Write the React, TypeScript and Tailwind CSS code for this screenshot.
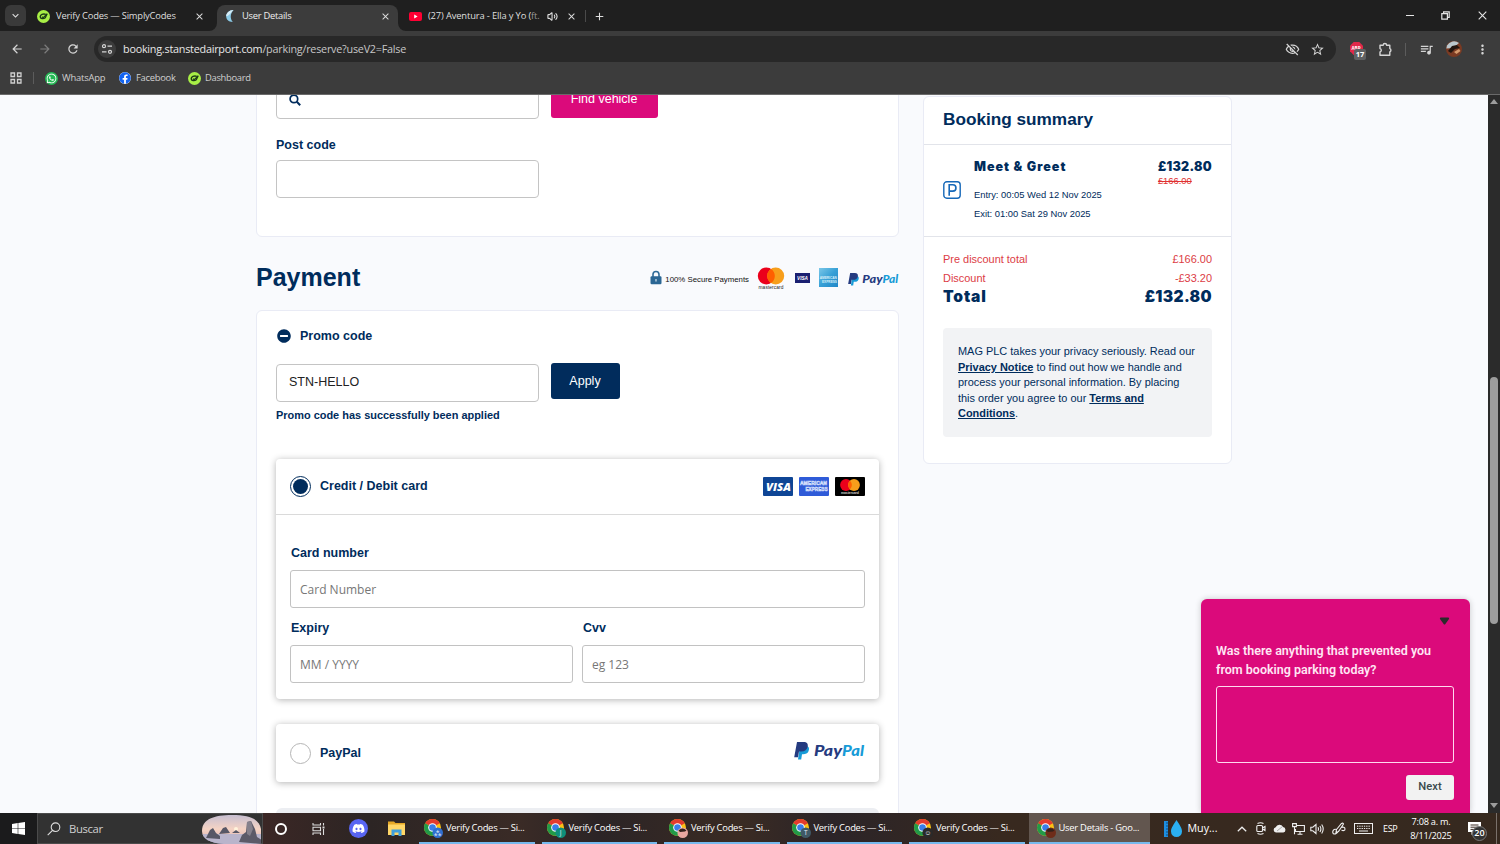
import type { ReactNode } from 'react';
import {
  MdAdd,
  MdArrowBack,
  MdArrowForward,
  MdClose,
  MdExpandMore,
  MdMoreVert,
  MdOutlineVisibilityOff,
  MdQueueMusic,
  MdRefresh,
  MdStarBorder,
} from 'react-icons/md';
import { FaDiscord, FaFacebook, FaMinusCircle, FaWhatsapp } from 'react-icons/fa';
import { Volume2 } from 'lucide-react';

export default function App() {
  return (
    <div className="flex h-[844px] w-[1500px] flex-col overflow-hidden bg-[#f9fafd] font-['Liberation_Sans',sans-serif] text-[#002c5c]">
      <TabStrip />
      <Toolbar />
      <Bookmarks />

      <div className="relative flex h-[718px] shrink-0 overflow-hidden">
        <main className="flex w-[1488px] items-start gap-6 pl-[256px]">
          <div className="flex w-[643px] shrink-0 flex-col">
            <VehicleCard />
            <PaymentHeading />
            <PaymentCard />
          </div>
          <BookingSummary />
        </main>
        <PageScrollbar />
        <SurveyWidget />
      </div>

      <Taskbar />
    </div>
  );
}

/* ---------- Browser ---------- */

function TabStrip() {
  return (
    <div className="flex h-[31px] shrink-0 items-end bg-[#1f1f1f] font-['Open_Sans',sans-serif] text-[9.4px] text-[#dedede]">
      <div className="mb-[5px] ml-[5px] flex h-[21px] w-[21px] items-center justify-center rounded-md bg-[#3a3a3a]">
        <MdExpandMore className="h-[13px] w-[13px]" />
      </div>

      <div className="flex h-[26px] w-[191px] items-center pb-1 pl-[11px]">
        <SimplyLogo />
        <span className="mt-px ml-[6px] w-[138px] whitespace-nowrap tracking-[-0.19px]">Verify Codes — SimplyCodes</span>
        <MdClose className="h-[11px] w-[11px]" />
      </div>

      <div className="relative flex h-[26px] w-[181px] items-center rounded-t-lg bg-[#3c3c3c] pb-1 pl-[8px]">
        <TabFlare side="left" />
        <TabFlare side="right" />
        <svg viewBox="0 0 12 14" className="h-[14px] w-3">
          <path d="M8.500 1C4 1.200 1.200 4 1.200 7.200S3.500 12.800 7.800 13C5 9.500 5 5 8.500 1Z" fill="#8ccbe8" />
          <path d="M8.500 1C4 1.200 1.200 4 1.200 7.200 3 7.500 5 5 8.500 1Z" fill="#d5ecf7" />
        </svg>
        <span className="mt-px ml-[5px] w-[138px] tracking-[-0.27px] text-[#eee]">User Details</span>
        <MdClose className="h-[11px] w-[11px]" />
      </div>

      <div className="flex h-[26px] items-center pb-1 pl-[11px]">
        <svg viewBox="0 0 13 9" className="h-[9px] w-[13px]">
          <rect width="13" height="9" rx="2" fill="#ff0033" />
          <path d="M5.200 2.500v4l3.400-2z" fill="#fff" />
        </svg>
        <span className="mt-px ml-[6px] w-[119px] whitespace-nowrap tracking-[-0.15px]">
          (27) Aventura - Ella y Yo (<span className="text-[#999]">ft.</span>
        </span>
        <Volume2 className="h-[11px] w-[11px]" strokeWidth={2.4} />
        <MdClose className="ml-[8px] h-[11px] w-[11px]" />
        <span className="ml-[8px] h-[12px] w-px bg-[#4a4a4a]" />
        <MdAdd className="ml-[7px] h-[13px] w-[13px]" />
      </div>

      <div className="mb-[5px] ml-auto flex h-[21px] items-center">
        <span className="h-px w-[8px] bg-[#e5e5e5]" />
        <svg viewBox="0 0 9 9" className="ml-[27px] h-[9px] w-[9px]" fill="none" stroke="#e5e5e5" strokeWidth="1.2">
          <path d="M.8 2.600h5.600v5.600H.8zM2.600 2.600V.8h5.600v5.600H6.400" />
        </svg>
        <svg viewBox="0 0 9 9" className="mr-[13px] ml-[28px] h-[9px] w-[9px]" stroke="#e5e5e5" strokeWidth="1.1">
          <path d="m.7.700 7.600 7.600m0-7.600L.7 8.300" />
        </svg>
      </div>
    </div>
  );
}

function TabFlare({ side }: { side: 'left' | 'right' }) {
  return (
    <svg
      viewBox="0 0 8 8"
      className={`absolute bottom-0 h-2 w-2 ${side === 'left' ? '-left-2' : '-right-2 -scale-x-100'}`}
    >
      <path d="M8 0a8 8 0 0 1-8 8h8z" fill="#3c3c3c" />
    </svg>
  );
}

function Toolbar() {
  return (
    <div className="flex h-[36px] shrink-0 items-center bg-[#3c3c3c] text-[#d5d5d5]">
      <MdArrowBack className="ml-[10px] h-[14px] w-[14px]" />
      <MdArrowForward className="ml-[14px] h-[14px] w-[14px] text-[#7d7d7d]" />
      <MdRefresh className="ml-[14px] h-[14px] w-[14px]" />

      <div className="ml-[14px] flex h-[26px] w-[1242px] items-center rounded-full bg-[#282828] pl-[4px]">
        <span className="flex h-[18px] w-[18px] items-center justify-center rounded-full bg-[#3c3c3c]">
          <svg viewBox="0 0 12 12" className="h-[12px] w-[12px]" fill="none" stroke="#d5d5d5" strokeWidth="1.2">
            <circle cx="3" cy="3.200" r="1.500" />
            <path d="M6.500 3.200H11M1 8.800h4.500" />
            <circle cx="9" cy="8.800" r="1.500" />
          </svg>
        </span>
        <span className="mt-px ml-[7px] font-['Open_Sans',sans-serif] text-[10.8px] tracking-[-0.23px] text-[#e8e8e8]">
          booking.stanstedairport.com<span className="text-[#c7c7c7]">/parking/reserve?useV2=False</span>
        </span>
        <MdOutlineVisibilityOff className="ml-auto h-[15px] w-[15px]" />
        <MdStarBorder className="mr-[11px] ml-[10px] h-[15px] w-[15px]" />
      </div>

      <div className="relative ml-[14px] h-[16px] w-[18px] font-['Open_Sans',sans-serif]">
        <svg viewBox="0 0 14 14" className="mt-px h-[13px] w-[13px]">
          <path d="M4 0h6l4 4v6l-4 4H4l-4-4V4z" fill="#e0284a" />
          <text x="1.500" y="8.800" fontSize="5" fontWeight="700" fill="#fff">ABP</text>
        </svg>
        <span className="absolute top-[8px] left-[4px] flex h-[11px] w-[12px] items-center justify-center rounded-[2px] bg-[#5f6163] text-[7.5px] font-bold text-white">
          17
        </span>
      </div>
      <svg viewBox="0 0 15 15" className="ml-[10px] h-[15px] w-[15px]" fill="none" stroke="#d5d5d5" strokeWidth="1.4">
        <path d="M2 3.200h3.200a1.700 1.700 0 0 1 3.400 0h3.200v3.400a1.700 1.700 0 0 1 0 3.200v3.400H2V9.900a1.700 1.700 0 0 0 0-3.300z" strokeLinejoin="round" />
      </svg>
      <span className="ml-[12px] h-[13px] w-px bg-[#5c5c5c]" />
      <MdQueueMusic className="ml-[13px] h-[15px] w-[15px]" />
      <svg viewBox="0 0 16 16" className="ml-[12px] h-4 w-4">
        <circle cx="8" cy="8" r="8" fill="#7a3a22" />
        <path d="M1 4.500a8 8 0 0 1 12-2.500L7 7 .3 7.500z" fill="#b9c6cc" />
        <path d="M2 10 6 5l5-1 3 3-5 1-4 4z" fill="#21150f" />
        <path d="m8 11 5-3 1.500 2-4 3z" fill="#d59a6c" />
      </svg>
      <MdMoreVert className="ml-[13px] h-[15px] w-[15px]" />
    </div>
  );
}

function Bookmarks() {
  return (
    <div className="flex h-[28px] shrink-0 items-center border-b border-[#6a6a6a] bg-[#3c3c3c] pb-[5px] font-['Open_Sans',sans-serif] text-[9.4px] text-[#cfcfcf]">
      <svg viewBox="0 0 12 12" className="ml-[10px] h-[12px] w-[12px]" fill="none" stroke="#cfcfcf" strokeWidth="1.3">
        <path d="M1 1h3.500v3.500H1zM7.500 1H11v3.500H7.500zM1 7.500h3.500V11H1zM7.500 7.500H11V11H7.500z" />
      </svg>
      <span className="ml-[11px] h-[12px] w-px bg-[#5c5c5c]" />
      <span className="ml-[11px] flex h-[13px] w-[13px] items-center justify-center rounded-full bg-[#24b954]">
        <FaWhatsapp className="h-[11px] w-[11px] text-white" />
      </span>
      <span className="mt-px ml-[4px] w-[57px] tracking-[-0.19px]">WhatsApp</span>
      <span className="flex h-[12px] w-[12px] rounded-full bg-white">
        <FaFacebook className="h-[12px] w-[12px] text-[#1464f0]" />
      </span>
      <span className="mt-px ml-[5px] w-[52px] tracking-[-0.27px]">Facebook</span>
      <SimplyLogo />
      <span className="mt-px ml-[4px] tracking-[-0.3px]">Dashboard</span>
    </div>
  );
}

function SimplyLogo() {
  return (
    <svg viewBox="0 0 13 13" className="h-[13px] w-[13px] shrink-0">
      <circle cx="6.500" cy="6.500" r="6.500" fill="#a8ef46" />
      <path d="M8.800 4.300C6 3.500 3.200 4.600 3.200 6.800c0 2 3.200 2.500 5 .9L10 4" fill="none" stroke="#1d3b16" strokeWidth="1.4" />
      <path d="m4.900 6.700 1.300 1L10.300 3.600" fill="none" stroke="#1d3b16" strokeWidth="1.1" />
    </svg>
  );
}

function PageScrollbar() {
  return (
    <div className="flex w-3 flex-col items-center bg-[#2b2b2b]">
      <span className="mt-[4px] border-x-[4px] border-b-[5px] border-x-transparent border-b-[#9d9d9d]" />
      <span className="mt-[273px] h-[247px] w-[8px] rounded-full bg-[#9d9d9d]" />
      <span className="mt-auto mb-[5px] border-x-[4px] border-t-[5px] border-x-transparent border-t-[#9d9d9d]" />
    </div>
  );
}

/* ---------- Booking form ---------- */

function VehicleCard() {
  return (
    <section className="-mt-[24px] flex h-[166px] flex-col rounded-md border border-[#e9ebf5] bg-white px-[19px] pt-[9px]">
      <div className="flex gap-[12px]">
        <div className="flex h-[38px] w-[263px] items-center rounded-[4px] border border-[#c4c4c4] pl-[12px]">
          <svg viewBox="0 0 12 12" className="h-[12px] w-[12px]" fill="none" stroke="#002c5c" strokeWidth="1.7">
            <circle cx="4.900" cy="4.900" r="3.800" />
            <path d="m7.800 7.800 3.400 3.400" strokeWidth="2" />
          </svg>
        </div>
        <button className="mt-[2px] h-[35px] w-[107px] rounded-[3px] bg-[#db0a7b] pr-px pb-[3px] text-[12.5px] text-white">Find vehicle</button>
      </div>
      <label className="mt-[18px] text-[12.5px] leading-4 font-bold">Post code</label>
      <div className="mt-[7px] h-[38px] w-[263px] rounded-[4px] border border-[#c4c4c4]" />
    </section>
  );
}

function PaymentHeading() {
  return (
    <div className="flex h-[73px] items-center pt-[8px]">
      <h2 className="text-[25px] font-bold">Payment</h2>
      <svg viewBox="0 0 12 14" className="ml-auto h-[15px] w-[12px]">
        <path d="M3 7V4a3 3 0 0 1 6 0v3" fill="none" stroke="#2f6a97" strokeWidth="1.6" />
        <rect x=".5" y="5.800" width="11" height="8" rx="1.200" fill="#2b6694" />
        <path d="M6 8.500v2.500" stroke="#d6e4ee" strokeWidth="1.2" />
      </svg>
      <span className="mt-[4px] ml-[3px] text-[7.8px] text-[#111]">100% Secure Payments</span>
      <svg viewBox="0 0 28 23" className="mt-px ml-[8px] h-[23px] w-[28px]">
        <circle cx="9.300" cy="9" r="8.500" fill="#eb001b" />
        <circle cx="18.700" cy="9" r="8.500" fill="#f79e1b" />
        <path d="M14 1.900a8.500 8.500 0 0 1 0 14.200 8.500 8.500 0 0 1 0-14.200" fill="#ff5f00" />
        <text x="1.500" y="21.500" fontSize="4.800" textLength="25" fill="#222">mastercard</text>
      </svg>
      <svg viewBox="0 0 15 10" className="ml-[10px] h-[10px] w-[15px]">
        <rect width="15" height="10" fill="#1a1f71" />
        <text x="2" y="7" fontSize="5.500" fontWeight="700" fontStyle="italic" textLength="11" lengthAdjust="spacingAndGlyphs" fill="#fff">VISA</text>
      </svg>
      <svg viewBox="0 0 19 19" className="ml-[9px] h-[19px] w-[19px]">
        <defs>
          <linearGradient id="amexFade" x1="0" y1="0" x2="1" y2="1">
            <stop offset="0" stopColor="#7ac7e8" />
            <stop offset="0.5" stopColor="#38a0d6" />
            <stop offset="1" stopColor="#1f86c8" />
          </linearGradient>
        </defs>
        <rect width="19" height="19" fill="url(#amexFade)" />
        <g fontSize="3.500" fontWeight="700" fill="#d9f0fa">
          <text x=".8" y="11" textLength="17" lengthAdjust="spacingAndGlyphs">AMERICAN</text>
          <text x="3" y="14.800" textLength="15" lengthAdjust="spacingAndGlyphs">EXPRESS</text>
        </g>
      </svg>
      <PayPalLogo className="mt-[3px] ml-[10px] h-[13px] w-[51px]" />
    </div>
  );
}

function PaymentCard() {
  return (
    <section className="flex h-[560px] shrink-0 flex-col rounded-t-md border border-[#e9ebf5] bg-white px-[19px] pt-[16px]">
      <div className="flex h-[18px] items-center">
        <FaMinusCircle className="ml-px h-[14px] w-[14px]" />
        <span className="ml-[9px] text-[12.5px] font-bold">Promo code</span>
      </div>
      <div className="mt-[18px] flex gap-[12px]">
        <div className="mt-px flex h-[38px] w-[263px] items-center rounded-[4px] border border-[#c4c4c4] pb-px pl-[12px] text-[12.5px] text-[#222]">
          STN-HELLO
        </div>
        <button className="h-[36px] w-[69px] rounded-[3px] bg-[#012c5c] pr-px text-[12.5px] text-white">Apply</button>
      </div>
      <p className="mt-[6px] text-[10.94px] leading-[14px] font-bold">Promo code has successfully been applied</p>

      <div className="mt-[37px] flex h-[240px] shrink-0 flex-col rounded-[4px] bg-white shadow-[0_1px_7px_rgba(0,0,0,0.3)]">
        <div className="flex h-[56px] items-center border-b border-[#dadada] px-[14px] text-[12.5px] font-bold">
          <span className="flex h-[21px] w-[21px] items-center justify-center rounded-full border border-[#002c5c]">
            <span className="h-[15px] w-[15px] rounded-full bg-[#002c5c]" />
          </span>
          <span className="ml-[9px]">Credit / Debit card</span>
          <CardBrands />
        </div>
        <div className="flex flex-col pt-[30px] pr-[14px] pl-[15px] text-[12.5px] leading-4 font-bold">
          <Field label="Card number" placeholder="Card Number" />
          <div className="mt-[12px] flex gap-[10px]">
            <Field label="Expiry" placeholder="MM / YYYY" />
            <Field label="Cvv" placeholder="eg 123" />
          </div>
        </div>
      </div>

      <div className="mt-[25px] flex h-[58px] shrink-0 items-center rounded-[4px] bg-white px-[14px] shadow-[0_1px_7px_rgba(0,0,0,0.3)]">
        <span className="h-[21px] w-[21px] rounded-full border border-[#b5b5b5]" />
        <span className="ml-[9px] text-[12.5px] font-bold">PayPal</span>
        <PayPalLogo className="mb-[5px] ml-auto h-[18px] w-[71px]" />
      </div>

      <div className="mt-[26px] h-[40px] shrink-0 rounded-md bg-[#eceef2]" />
    </section>
  );
}

function Field({ label, placeholder }: { label: string; placeholder: string }) {
  return (
    <div className="flex flex-1 flex-col">
      <label>{label}</label>
      <div className="mt-[9px] -ml-px flex h-[38px] items-center rounded-[3px] border border-[#c2c2c2] pt-px pl-[9px] font-['Open_Sans',sans-serif] text-[12px] font-normal text-[#777]">
        {placeholder}
      </div>
    </div>
  );
}

function CardBrands() {
  return (
    <div className="ml-auto flex gap-[6px]">
      <svg viewBox="0 0 30 19" className="h-[19px] w-[30px]">
        <rect width="30" height="19" rx="1" fill="#0e4595" />
        <text x="3" y="13.500" fontSize="11" fontFamily="Open Sans, sans-serif" fontWeight="800" fontStyle="italic" textLength="25" lengthAdjust="spacingAndGlyphs" fill="#fff">VISA</text>
      </svg>
      <svg viewBox="0 0 30 19" className="h-[19px] w-[30px]">
        <rect width="30" height="19" rx="1" fill="#2f5bd8" />
        <g fontSize="5" fontWeight="700" fill="#2f5bd8" stroke="#cfdcfa" strokeWidth=".6">
          <text x="1" y="8.300" textLength="27" lengthAdjust="spacingAndGlyphs">AMERICAN</text>
          <text x="6.500" y="14.300" textLength="22" lengthAdjust="spacingAndGlyphs">EXPRESS</text>
        </g>
      </svg>
      <svg viewBox="0 0 30 19" className="h-[19px] w-[30px]">
        <rect width="30" height="19" rx="1" fill="#000" />
        <circle cx="11" cy="8" r="5.900" fill="#eb001b" />
        <circle cx="19" cy="8" r="5.900" fill="#f79e1b" />
        <path d="M15 3.700a5.900 5.900 0 0 1 0 8.600 5.900 5.900 0 0 1 0-8.600" fill="#ff5f00" />
        <text x="6" y="17.400" fontSize="3.500" textLength="18" fill="#ccc">mastercard</text>
      </svg>
    </div>
  );
}

function PayPalLogo({ className }: { className: string }) {
  return (
    <svg viewBox="0 0 71 18" className={className}>
      <path d="M6 4h6.500c2.800.6 3 3 2 5.200-1 2.300-2.800 3-5.400 3H8L7.200 17.500H4z" fill="#179bd7" />
      <path d="M3 0h6.500c3.500 0 4.800 2 4.200 4.700-.7 3.200-3 4.800-6.200 4.800H5L4 15.300H.2z" fill="#253b80" />
      <g fontFamily="Lato, sans-serif" fontSize="15" fontWeight="900" fontStyle="italic">
        <text x="20" y="14.300" textLength="28" lengthAdjust="spacingAndGlyphs" fill="#253b80">Pay</text>
        <text x="48" y="14.300" textLength="22" lengthAdjust="spacingAndGlyphs" fill="#179bd7">Pal</text>
      </g>
    </svg>
  );
}

/* ---------- Summary ---------- */

function BookingSummary() {
  return (
    <aside className="mt-px flex h-[368px] w-[309px] shrink-0 flex-col rounded-md border border-[#e9ebf5] bg-white">
      <h3 className="flex h-[48px] shrink-0 items-center border-b border-[#e2e4ea] px-[19px] pb-px text-[17.2px] font-bold">Booking summary</h3>

      <div className="flex h-[92px] shrink-0 border-b border-[#e2e4ea] px-[19px]">
        <svg viewBox="0 0 18 18" className="mt-[36px] h-[18px] w-[18px]" fill="none" stroke="#1668b8">
          <rect x=".8" y=".8" width="16.400" height="16.400" rx="3" strokeWidth="1.4" />
          <path d="M6.200 14.800V3.800h3.600a3.100 3.100 0 0 1 0 6.300H6.200" strokeWidth="1.6" />
        </svg>
        <div className="ml-[13px] flex flex-col">
          <span className="mt-[13px] font-['Inter',sans-serif] text-[12.5px] leading-[18px] font-black tracking-[1px]">Meet &amp; Greet</span>
          <span className="mt-[10px] text-[9.375px] leading-[18.5px]">Entry: 00:05 Wed 12 Nov 2025</span>
          <span className="text-[9.375px] leading-[18.5px]">Exit: 01:00 Sat 29 Nov 2025</span>
        </div>
        <div className="ml-auto flex flex-col">
          <span className="mt-[13px] font-['Inter',sans-serif] text-[12.5px] leading-[18px] font-black tracking-[0.3px]">£132.80</span>
          <span className="text-[9.375px] leading-[11px] text-[#e03030] line-through">£166.00</span>
        </div>
      </div>

      <div className="flex flex-col px-[19px] pt-[13px]">
        <div className="flex justify-between text-[10.94px] leading-[18.5px] text-[#dc3c45]">
          <span>Pre discount total</span>
          <span>£166.00</span>
        </div>
        <div className="flex justify-between text-[10.94px] leading-[18.5px] text-[#dc3c45]">
          <span>Discount</span>
          <span>-£33.20</span>
        </div>
        <div className="flex justify-between font-['Inter',sans-serif] text-[15.6px] leading-5 font-black">
          <span className="tracking-[0.85px]">Total</span>
          <span className="tracking-[0.35px]">£132.80</span>
        </div>
        <p className="mt-[21px] h-[109px] rounded-[4px] bg-[#f2f3f5] pt-[16px] pl-[15px] text-[10.94px] leading-[15.6px]">
          MAG PLC takes your privacy seriously. Read our
          <br />
          <b className="underline">Privacy Notice</b> to find out how we handle and
          <br />
          process your personal information. By placing
          <br />
          this order you agree to our <b className="underline">Terms and</b>
          <br />
          <b className="underline">Conditions</b>.
        </p>
      </div>
    </aside>
  );
}

function SurveyWidget() {
  return (
    <div className="absolute right-[30px] bottom-0 flex h-[214px] w-[269px] flex-col rounded-t-md bg-[#db0a7b] pr-4 pl-[15px] font-['Roboto',sans-serif] shadow-[0_0_6px_rgba(0,0,0,0.2)]">
      <svg viewBox="0 0 11 8" className="mt-[18px] mr-[4px] h-[8px] w-[11px] self-end">
        <path d="M1.500.5h8q1 .5.500 1.500L6 7.500H5L1 2Q.5 1 1.500.5Z" fill="#2b2b2b" />
      </svg>
      <p className="mt-[16px] text-[12.5px] leading-[19px] font-semibold whitespace-nowrap text-[#ffe6f4]">
        Was there anything that prevented you
        <br />
        from booking parking today?
      </p>
      <div className="mt-[7px] h-[77px] shrink-0 rounded-[3px] border border-[#ffd9ee]" />
      <button className="mt-[12px] h-[25px] w-[48px] self-end rounded-[3px] bg-[#f2f2f2] text-[11.2px] font-medium text-[#3a4a4c]">Next</button>
    </div>
  );
}

/* ---------- Windows taskbar ---------- */

const windows: { title: string; badge: string; letter?: string; active?: boolean }[] = [
  { title: 'Verify Codes — Si...', badge: '#2f6fd0', letter: '⁂' },
  { title: 'Verify Codes — Si...', badge: '#0e8f7a', letter: 'J' },
  { title: 'Verify Codes — Si...', badge: '#e9a7a0' },
  { title: 'Verify Codes — Si...', badge: '#3f5866', letter: 'T' },
  { title: 'Verify Codes — Si...', badge: '#2a2a2a', letter: '☺' },
  { title: 'User Details - Goo...', badge: '#6e2c1a', active: true },
];

function Taskbar() {
  return (
    <div className="flex h-[31px] shrink-0 items-center bg-[linear-gradient(90deg,#3b2725_263px,#2c2524_370px,#3a2b26_520px,#2b2426_600px,#3a2b23_740px,#2b2428_830px,#38291f_1000px,#36291f_1500px)] font-['Open_Sans',sans-serif] text-white">
      <div className="flex h-full w-[37px] items-center justify-center bg-[#1b1b1c]">
        <svg viewBox="0 0 13 13" className="h-[13px] w-[13px]" fill="#fff">
          <path d="m0 1.900 5.700-.8v5.100H0zM6.300 1 13 0v6.200H6.300zM0 6.800h5.700v5.100L0 11.100zM6.300 6.800H13V13l-6.700-1z" />
        </svg>
      </div>
      <div className="flex h-full w-[226px] items-center border border-[#4b4b4b] bg-[#323232]">
        <svg viewBox="0 0 14 14" className="ml-[9px] h-[14px] w-[14px]" fill="none" stroke="#ddd" strokeWidth="1.1">
          <circle cx="8.500" cy="5.200" r="4.300" />
          <path d="M5.500 8.300.7 13.200" />
        </svg>
        <span className="mt-px ml-[8px] text-[11.3px] tracking-[-0.35px] text-[#cfcfcf]">Buscar</span>
        <SearchHighlight />
      </div>

      <div className="flex items-center">
        <span className="ml-[12px] h-[12px] w-[12px] rounded-full border-2 border-white" />
        <svg viewBox="0 0 13 12" className="ml-[25px] h-3 w-[13px]" fill="none" stroke="#ddd" strokeWidth="1.1">
          <path d="M1 0v2h7.500V0M1 4.200h7.500v3.600H1zM1 12v-2h7.500v2M11.500 0v2.500M11.500 6v6" />
          <path d="M11.500 3.500v2" strokeWidth="2" />
        </svg>
        <span className="ml-[24px] flex h-[19px] w-[19px] items-center justify-center rounded-full bg-[#5865f2]">
          <FaDiscord className="h-[13px] w-[13px]" />
        </span>
        <svg viewBox="0 0 17 15" className="ml-[20px] h-[15px] w-[17px]">
          <path d="M0 .5h6l1.500 1.500H17v12H0z" fill="#e6a927" />
          <path d="M0 3.500h17v10.500H0z" fill="#ffd768" />
          <path d="M3.500 8.500h10V15h-3v-3.500h-4V15h-3z" fill="#3f9fdc" />
        </svg>
      </div>

      <div className="ml-[14px] flex h-full gap-[7px]">
        {windows.map((w, i) => (
          <div
            key={i}
            className={`flex h-full items-center border-b-2 border-[#76b9ed] ${
              w.active ? '-ml-[3px] w-[121px] bg-[#62564f] pl-[8px]' : 'w-[115.5px] pl-[5px]'
            }`}
          >
            <ChromeIcon badge={w.badge} letter={w.letter} />
            <span className="mt-[2px] ml-[2px] text-[9.4px] tracking-[-0.25px] whitespace-nowrap">{w.title}</span>
          </div>
        ))}
      </div>

      <svg viewBox="0 0 20 20" className="ml-[13px] h-5 w-5">
        <path d="M1 2h4v16H1z" fill="#1e8fe0" />
        <path d="M3 4H5M3 7H5M3 10H5M3 13H5M3 16H5" stroke="#0c4d87" />
        <path d="M13.500 1c3 5 5.500 7.500 5.500 11.500a5.500 5.500 0 0 1-11 0C8 8.500 10.500 6 13.500 1Z" fill="#2bb0f2" />
      </svg>
      <span className="ml-[5px] text-[10.7px]">Muy...</span>
      <Tray />
    </div>
  );
}

function ChromeIcon({ badge, letter }: { badge: string; letter?: string }) {
  return (
    <svg viewBox="0 0 20 20" className="mt-[2px] h-5 w-5 shrink-0">
      <circle cx="8.500" cy="8.500" r="8.500" fill="#fbc116" />
      <path d="M8.500 8.500 1.140 4.250a8.500 8.500 0 0 1 14.720 0z" fill="#e33b2e" />
      <path d="M1.140 4.250A8.500 8.500 0 0 0 8.500 17l3.500-6.500-3.500-2z" fill="#229a48" />
      <circle cx="8.500" cy="8.500" r="4.300" fill="#fff" />
      <circle cx="8.500" cy="8.500" r="3.300" fill="#3a7de8" />
      <Badge color={badge}>{letter}</Badge>
    </svg>
  );
}

function Badge({ color, children }: { color: string; children?: ReactNode }) {
  return (
    <>
      <circle cx="13.700" cy="13.700" r="5.300" fill={color} />
      {children ? (
        <text x="13.700" y="16.200" fontSize="6.500" textAnchor="middle" fill="#e5eef5">{children}</text>
      ) : (
        <path d="M9.500 11.500q4-4 8 0l-1.500 1-5 .5z" fill="#33211b" />
      )}
    </>
  );
}

function SearchHighlight() {
  return (
    <svg viewBox="0 0 60 30" className="ml-auto h-[30px] w-[60px]">
      <defs>
        <clipPath id="stoneClip">
          <path d="M0 17C0 5 12 1 30 1s27 4 29 14v15H22C8 29 0 25 0 17Z" />
        </clipPath>
        <linearGradient id="duskSky" x1="0" y1="0" x2="0" y2="1">
          <stop offset="0" stopColor="#c3bdd2" />
          <stop offset="0.5" stopColor="#f5d3c4" />
          <stop offset="0.65" stopColor="#ecc7bd" />
          <stop offset="1" stopColor="#7d8bb0" />
        </linearGradient>
      </defs>
      <g clipPath="url(#stoneClip)">
        <path d="M0 0h60v30H0z" fill="url(#duskSky)" />
        <path d="M0 20h60v10H0z" fill="#b9b4cb" />
        <circle cx="34" cy="15" r="2" fill="#fff3dc" />
        <path d="M4 24 8 16l3-2 3 5 4 3v3zM17 20l4-6 3-1 4 6zM30 19l4-3 4 3z" fill="#575766" />
        <path d="m37 28 3-7 4-3 1-10 4-1 4 8 2 8 5 3v4z" fill="#5c5a68" />
        <path d="m45 8 4-1 2 8-3 7-3-2z" fill="#85808b" />
      </g>
    </svg>
  );
}

function Tray() {
  return (
    <div className="ml-auto flex h-full items-center">
      <svg viewBox="0 0 10 6" className="h-[6px] w-[10px]" fill="none" stroke="#eee" strokeWidth="1.2">
        <path d="m.8 5.200 4.200-4 4.200 4" />
      </svg>
      <svg viewBox="0 0 10 13" className="ml-[9px] h-[13px] w-[10px]" fill="none" stroke="#eee" strokeWidth="1.1">
        <rect x=".8" y="3.500" width="5.700" height="6" rx="1" />
        <path d="m6.500 6 2.500-1.500v4L6.500 7M1.500 1.500q3-1.500 6 0M1.500 11.500q3 1.500 6 0" />
      </svg>
      <svg viewBox="0 0 13 9" className="ml-[7px] h-[9px] w-[13px]">
        <path d="M3 8.500a2.700 2.700 0 0 1-.3-5.300A4 4 0 0 1 10 3a2.800 2.800 0 0 1 .3 5.500z" fill="#eee" />
        <path d="M4 7 9.500 2.500" stroke="#aaa" />
      </svg>
      <svg viewBox="0 0 13 12" className="ml-[6px] h-[12px] w-[13px]" fill="none" stroke="#eee" strokeWidth="1.1">
        <path d="M5 2.500h7.400v6H3.500V6M5.500 11.300h5M8 8.500v2.800M.6.600h3.800v3H.6zM2.500 3.600v7.700" />
      </svg>
      <svg viewBox="0 0 14 12" className="ml-[5px] h-[12px] w-[14px]" fill="none" stroke="#eee" strokeWidth="1.1">
        <path d="M.8 4.200h2L6 1.500v9L2.800 7.800h-2zM8 4.300q1 1.700 0 3.400M9.900 3q2 3 0 6M11.700 1.500q3 4.500 0 9" />
      </svg>
      <svg viewBox="0 0 14 13" className="ml-[8px] h-[13px] w-[14px]" fill="none" stroke="#eee" strokeWidth="1.1">
        <path d="m4.500 7.500 5-6q1.500-1 2 .5l-5 7.500-2.500 1zM4.500 7.500C1.500 6.500 0 9.500 1.200 11.500c2 1.500 4-.5 5.300-2.500M9 5.500c2-.8 4-.3 4 1.500s-2 2-3.500 1" />
      </svg>
      <svg viewBox="0 0 19 11" className="ml-[8px] h-[11px] w-[19px]" fill="none" stroke="#eee">
        <rect x=".5" y=".5" width="18" height="10" />
        <path d="M3 3.200h13M3 5.500h13" strokeDasharray="1.300 1" />
        <path d="M5 8h9" />
      </svg>
      <span className="ml-[10px] w-[22px] text-[9px] tracking-[-0.3px]">ESP</span>
      <div className="flex w-[52px] flex-col items-center text-[9.2px] leading-[14px] tracking-[-0.25px] whitespace-nowrap">
        <span>7:08 a. m.</span>
        <span>8/11/2025</span>
      </div>
      <div className="relative ml-[11px] h-[20px] w-[20px]">
        <svg viewBox="0 0 13 13" className="mt-[3px] h-[13px] w-[13px]">
          <path d="M0 0h13v10H6l-2.500 3v-3H0z" fill="#fff" />
          <path d="M2.500 3h8M2.500 5.200h8M2.500 7.400h5" stroke="#3a2b22" />
        </svg>
        <span className="absolute top-[7px] left-[4px] flex h-[15px] w-[15px] items-center justify-center rounded-full border border-[#777] bg-[#333] text-[9px] font-semibold">
          20
        </span>
      </div>
      <span className="mr-[3px] ml-[8px] h-full w-px bg-[#7a716b]" />
    </div>
  );
}
